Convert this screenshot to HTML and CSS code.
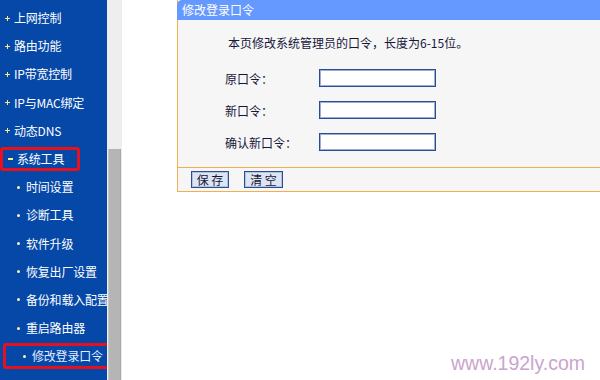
FILE: index.html
```html
<!DOCTYPE html>
<html>
<head>
<meta charset="utf-8">
<link rel="stylesheet" href="styles.css">
</head>
<body>
<div class="page">
  <nav class="sidebar">
    <ul class="menu">
      <li class="item top"><span class="lbl"><i class="plus"></i>上网控制</span></li>
      <li class="item top"><span class="lbl"><i class="plus"></i>路由功能</span></li>
      <li class="item top"><span class="lbl"><i class="plus"></i>IP带宽控制</span></li>
      <li class="item top"><span class="lbl"><i class="plus"></i>IP与MAC绑定</span></li>
      <li class="item top"><span class="lbl"><i class="plus"></i>动态DNS</span></li>
      <li class="item top"><span class="lbl hl hl-sys"><i class="minus"></i>系统工具</span></li>
      <li class="item sub"><span class="lbl"><i class="dot"></i>时间设置</span></li>
      <li class="item sub"><span class="lbl"><i class="dot"></i>诊断工具</span></li>
      <li class="item sub"><span class="lbl"><i class="dot"></i>软件升级</span></li>
      <li class="item sub"><span class="lbl"><i class="dot"></i>恢复出厂设置</span></li>
      <li class="item sub"><span class="lbl"><i class="dot"></i>备份和载入配置</span></li>
      <li class="item sub"><span class="lbl"><i class="dot"></i>重启路由器</span></li>
      <li class="item sub"><span class="lbl hl hl-cur"><i class="dot"></i>修改登录口令</span></li>
    </ul>
  </nav>
  <div class="scrollbar"><div class="thumb"></div></div>
  <main class="main">
    <section class="panel">
      <div class="panel-title">修改登录口令</div>
      <div class="panel-body">
        <p class="intro">本页修改系统管理员的口令，长度为6-15位。</p>
        <div class="form">
          <div class="row"><label class="label">原口令：</label><input class="field" type="password"></div>
          <div class="row"><label class="label">新口令：</label><input class="field" type="password"></div>
          <div class="row"><label class="label">确认新口令：</label><input class="field" type="password"></div>
        </div>
      </div>
      <div class="panel-foot">
        <button class="btn">保 存</button>
        <button class="btn">清 空</button>
      </div>
    </section>
  </main>
</div>
<div class="watermark">www.192ly.com</div>
</body>
</html>
```
FILE: styles.css
```css
* { box-sizing: border-box; }
html, body {
  margin: 0;
  padding: 0;
  width: 600px;
  height: 380px;
  overflow: hidden;
  background: #ffffff;
  font-family: "Noto Sans CJK SC", "Liberation Sans", sans-serif;
  font-size: 12px;
}
.page {
  display: flex;
  height: 380px;
  overflow: hidden;
}
.sidebar {
  width: 107px;
  flex: none;
  background: #0548a8;
  color: #ffffff;
}
.menu {
  list-style: none;
  margin: 0;
  padding: 4px 0 0 0;
}
.item {
  height: 28.2px;
  display: flex;
  align-items: center;
  white-space: nowrap;
}
.lbl {
  display: flex;
  align-items: center;
  height: 24px;
  line-height: 18px;
  font-size: 12px;
  letter-spacing: -0.2px;
}
.top .lbl { padding-left: 4px; }
.sub .lbl { padding-left: 16px; }
.plus, .minus, .dot {
  display: inline-block;
  flex: none;
}
.plus {
  width: 5px;
  height: 5px;
  margin: 0 4px 0 1px;
  background:
    linear-gradient(#ffe98a, #ffe98a) center / 5px 1px no-repeat,
    linear-gradient(#ffe98a, #ffe98a) center / 1px 5px no-repeat;
}
.minus {
  width: 5px;
  height: 2px;
  margin: 0 4px 0 1px;
  background: #ffe98a;
}
.dot {
  width: 3px;
  height: 3px;
  border-radius: 50%;
  background: #fff2b0;
  margin: 0 6px 0 1px;
}
.hl {
  border: 3px solid #e8101c;
  border-radius: 3px;
}
.hl-sys {
  padding-left: 0;
  padding-right: 13px;
}
.hl-cur {
  margin-left: 3px;
  padding-left: 10px;
  padding-right: 4px;
  height: 26px;
  color: #e4ecff;
}
.scrollbar {
  width: 15px;
  flex: none;
  background: #eeeeee;
  padding: 149px 1px 0 1px;
}
.thumb {
  height: 231px;
  background: #b5b5b5;
  border-left: 1px solid #c8c8c8;
  border-right: 1px solid #a8a8a8;
}
.main {
  flex: 1;
  padding-left: 55px;
  min-width: 0;
}
.panel {
  width: 450px;
  background: #f6f6f6;
  border-left: 1px solid #f0b050;
  border-bottom: 1px solid #f0b050;
}
.panel-title {
  height: 20px;
  line-height: 20px;
  background: #6699ff;
  color: #ffffff;
  padding-left: 5px;
  border-top-left-radius: 5px;
  margin-left: -1px;
  font-size: 12px;
}
.panel-body {
  padding: 13px 0 9px 0;
  border-bottom: 1px solid #f0b050;
}
.intro {
  margin: 0;
  height: 20px;
  line-height: 20px;
  padding-left: 50px;
  color: #16163a;
}
.form {
  display: flex;
  flex-direction: column;
  padding-top: 9px;
}
.row {
  display: flex;
  align-items: center;
  height: 32px;
}
.label {
  width: 141px;
  padding-left: 47px;
  color: #16163a;
}
.field {
  width: 117px;
  height: 18px;
  margin: 0;
  padding: 0;
  background: #ffffff;
  border: 1px solid #2c4c96;
  box-shadow: inset 0 0 0 1px #9aaed6;
  outline: none;
}
.panel-foot {
  height: 23px;
  display: flex;
  align-items: center;
  gap: 15px;
  padding-left: 13px;
}
.btn {
  height: 17px;
  width: 38px;
  padding: 0;
  margin: 0;
  font-family: "Noto Sans CJK SC", sans-serif;
  font-size: 12px;
  line-height: 13px;
  color: #16163a;
  background: #dde5f3;
  border: 1px solid #2c4c96;
  box-shadow: inset 0 0 0 1px #b4c2de;
}
.btn + .btn { width: 39px; }
.watermark {
  position: absolute;
  left: 451px;
  top: 351px;
  font-family: "Liberation Sans", Arial, sans-serif;
  font-size: 19.5px;
  line-height: 24px;
  color: #caa4cd;
}
```
